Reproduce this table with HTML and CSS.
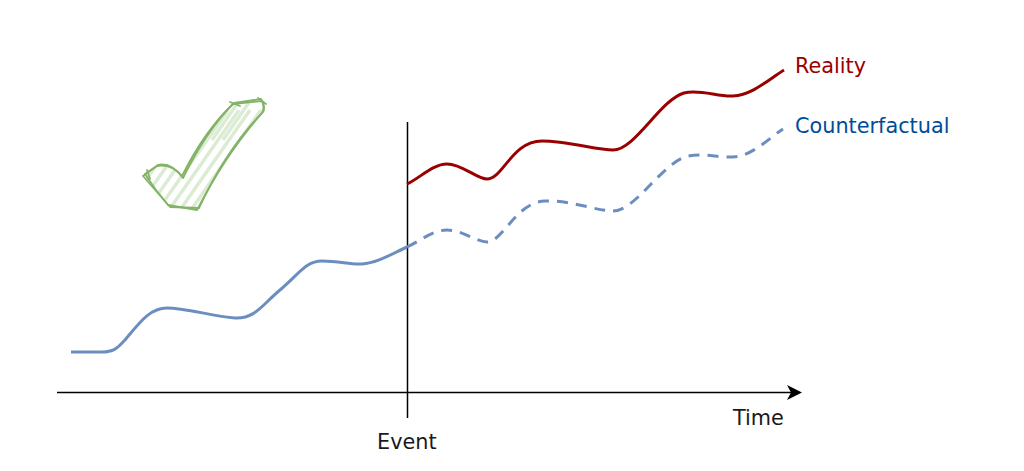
FILE: index.html
```html
<!DOCTYPE html>
<html lang="en">
<head>
<meta charset="utf-8">
<title>Reality vs Counterfactual</title>
<link rel="stylesheet" href="styles.css">
</head>
<body>
<main class="canvas">
  <svg class="diagram" width="1024" height="471" viewBox="0 0 1024 471" xmlns="http://www.w3.org/2000/svg">
    <defs>
      <clipPath id="checkClip">
        <path d="M143,176 L158,165 Q171,162 183,178 Q206,131 233,104 L262,101 Q265,107 262,113 Q226,150 199,208 L170,207 Z"/>
      </clipPath>
    </defs>

    <!-- checkmark: hatch fill -->
    <g class="hatch" clip-path="url(#checkClip)">
      <path d="M100,230 L184,110 M111,230 L195,110 M122,230 L206,110 M133,230 L217,110 M144,230 L228,110 M155,230 L239,110 M166,230 L250,110 M177,230 L261,110 M188,230 L272,110 M199,230 L283,110 M190,140 L251,52 M201,140 L262,52 M212,140 L273,52 M223,140 L284,52 M179,140 L240,52 M168,140 L229,52"/>
    </g>
    <!-- checkmark: sketchy outline -->
    <g class="check-stroke">
      <path d="M143,176 L158,165 Q171,162 183,178 Q206,131 233,104 L262,101 Q265,107 262,113 Q226,150 199,208 L170,207 Z"/>
      <path d="M145,174 L157,166 Q172,164 182,176 Q205,130 234,103 L261,99 Q266,108 263,112 Q227,152 197,210 L168,205 Q155,190 145,174"/>
      <path d="M147,170 L150,179 M230,102 L240,106 M258,98 L266,104"/>
    </g>

    <!-- axes -->
    <line class="axis" x1="57" y1="392.5" x2="792" y2="392.5"/>
    <path class="arrow" d="M802,392.5 L787,385 L791,392.5 L787,400 Z"/>
    <line class="axis" x1="407.5" y1="122" x2="407.5" y2="418"/>

    <!-- pre-event series -->
    <path class="series-blue" d="M71,352 L102,352 C115,352 118,347 125,340 C140,322 150,308 167,308 C185,308 212,316 235,318 C255,319 262,305 280,290 C300,273 306,261 322,261 C340,261 350,265 362,264 C378,263 393,253 407,247"/>

    <!-- counterfactual -->
    <path class="series-dash" d="M407,247 C420,241 433,230 447,230 C462,230 477,242 487,242 C503,242 516,202 545,201 C570,200 597,211 613,211 C635,211 660,166 685,157 C700,152 718,158 733,157 C752,156 768,139 783,129"/>

    <!-- reality -->
    <path class="series-red" d="M407,184 C420,178 433,164 447,164 C462,164 477,179 487,179 C503,179 512,141 542,141 C567,141 597,150 613,150 C635,150 660,100 684,93 C700,89 718,97 733,96 C752,95 768,80 784,70"/>

    <!-- labels -->
    <text class="label label-red" x="795" y="73">Reality</text>
    <text class="label label-blue" x="795" y="133">Counterfactual</text>
    <text class="label label-axis" x="733" y="425">Time</text>
    <text class="label label-axis" x="377" y="449">Event</text>
  </svg>
</main>
</body>
</html>
```
FILE: styles.css
```css
html, body {
  margin: 0;
  padding: 0;
  background: #ffffff;
}

.canvas {
  width: 1024px;
  height: 471px;
  overflow: hidden;
}

.diagram {
  display: block;
}

.axis {
  stroke: #000000;
  stroke-width: 1.5;
}

.arrow {
  fill: #000000;
}

.series-blue {
  fill: none;
  stroke: #6c8ebf;
  stroke-width: 3;
  stroke-linecap: butt;
}

.series-dash {
  fill: none;
  stroke: #6c8ebf;
  stroke-width: 3;
  stroke-dasharray: 11 8;
}

.series-red {
  fill: none;
  stroke: #990000;
  stroke-width: 3;
}

.hatch path {
  stroke: #dcecd4;
  stroke-width: 3.5;
  fill: none;
}

.check-stroke path {
  fill: none;
  stroke: #82b366;
  stroke-width: 1.8;
  stroke-linejoin: round;
  stroke-linecap: round;
}

.label {
  font-family: "DejaVu Sans", Verdana, sans-serif;
  font-size: 20.8px;
}

.label-red {
  fill: #990000;
}

.label-blue {
  fill: #004c99;
}

.label-axis {
  fill: #1a1a1a;
}
```
